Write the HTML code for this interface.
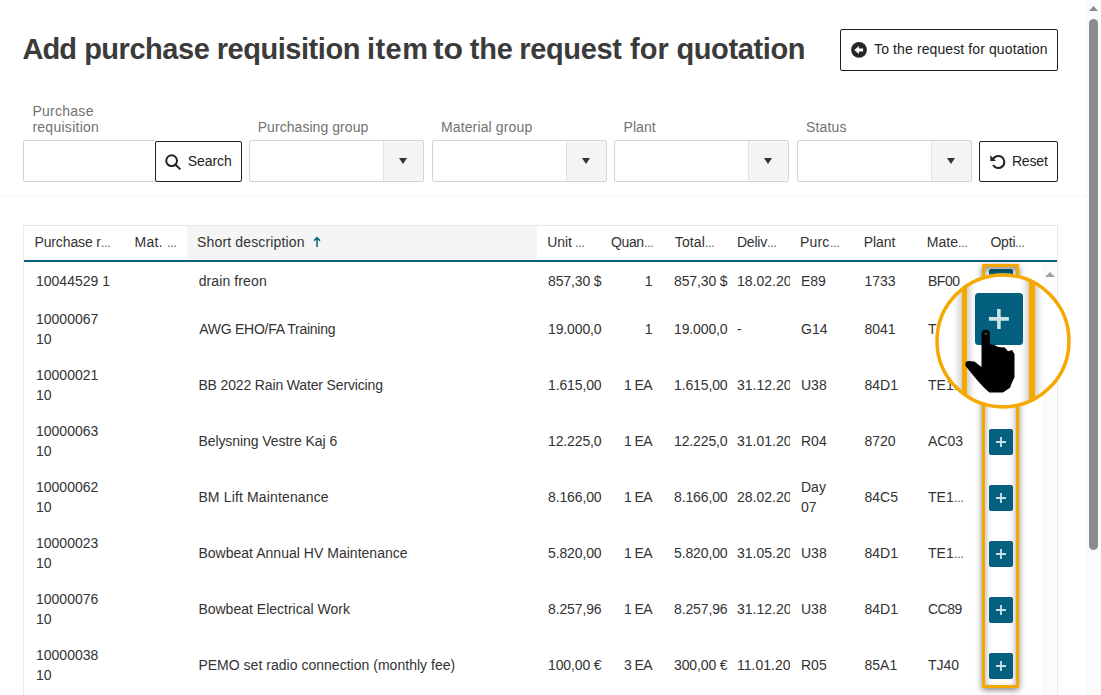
<!DOCTYPE html>
<html lang="en"><head><meta charset="utf-8"><title>Add purchase requisition item to the request for quotation</title>
<style>
*{box-sizing:border-box;margin:0;padding:0}
html,body{width:1101px;height:695px;overflow:hidden;background:#fff}
body{position:relative;font-family:"Liberation Sans",Arial,sans-serif;font-size:14px;color:#333;line-height:20px}
.abs{position:absolute}
#title{position:absolute;left:0;top:29px;height:40px;width:830px;font-size:29px;line-height:40px;font-weight:bold;color:#3b3b3b;white-space:nowrap}
.tw{position:absolute;top:0}
.btn{position:absolute;border:1px solid #1f1f1f;border-radius:2px;background:#fff;color:#222;white-space:nowrap}
.lbl{position:absolute;color:#727272;font-size:14px;line-height:16px;white-space:nowrap}
.inp{position:absolute;border:1px solid #d4d4d4;border-radius:2px;background:#fff;height:42px;top:140px}
.inp .arr{position:absolute;right:0;top:0;bottom:0;width:40px;background:#f4f4f4;border-left:1px solid #e2e2e2}
.inp .arr:after{content:"";position:absolute;left:15px;top:17px;border-left:4.5px solid transparent;border-right:4.5px solid transparent;border-top:6px solid #333}
#sep{position:absolute;left:0;top:196px;width:1086px;height:1px;background:#f6f6f6}
#table{position:absolute;left:23px;top:225px;width:1035px;height:480px;border:1px solid #e9e9e9;border-bottom:0;background:#fff}
#thead{position:absolute;left:24px;top:226px;width:1033px;height:34px}
#hline{position:absolute;left:24px;top:260px;width:1033px;height:2px;background:#0a5f7c}
#sortbg{position:absolute;left:187px;top:226px;width:350px;height:33px;background:#f5f5f5}
.h{position:absolute;top:232px;line-height:20px;color:#333;white-space:nowrap}
.row{position:absolute;left:0;width:1101px;height:0}
.c{position:absolute;white-space:nowrap;color:#333;line-height:20px}
.one{top:-10px}
.two{top:-20px}
.clip{overflow:hidden;width:53.500px;letter-spacing:-.12px}
.c1{left:36px}.c3{left:199px}.c4{left:548px}.c5{left:600px;width:52px;text-align:right;letter-spacing:-.6px}.c6{left:674px}.c7{left:737px;letter-spacing:0;width:53px}.c8{left:801px}.c9{left:864.500px}.c10{left:928px}
.plus{position:absolute;left:989px;top:-12px;width:24px;height:26px;background:#04617f;border-radius:2px}
.plus svg{position:absolute;left:6px;top:7px}
#iscroll{position:absolute;left:1042px;top:262px;width:15px;height:433px;background:#fbfbfb}
#pscroll{position:absolute;left:1086px;top:0;width:15px;height:695px;background:#fbfbfb}
#pthumb{position:absolute;left:3px;top:19px;width:9px;height:531px;background:#8b8b8b;border-radius:4.500px}
.el{display:inline-block;font-style:normal;width:10px;transform:scaleX(.7);transform-origin:0 50%}
#tw5{display:inline-block;transform:scaleX(1.1);transform-origin:0 50%}

</style></head><body>
<h1 id="title"><span class="tw" id="tw1" style="margin-left:-0.6px;letter-spacing:-0.851px;left:23px">Add</span> <span class="tw" id="tw2" style="margin-left:-1.88px;letter-spacing:-0.465px;left:86px">purchase</span> <span class="tw" id="tw3" style="margin-left:-2.27px;letter-spacing:-0.458px;left:219px">requisition</span> <span class="tw" id="tw4" style="margin-left:2.01px;letter-spacing:0.439px;left:365px">item</span> <span class="tw" id="tw5" style="margin-left:-0.7px;letter-spacing:0px;left:434px">to</span> <span class="tw" id="tw6" style="margin-left:-0.26px;letter-spacing:-0.164px;left:470px">the</span> <span class="tw" id="tw7" style="margin-left:-11.69px;letter-spacing:-0.379px;left:531px">request</span> <span class="tw" id="tw8" style="margin-left:1.1px;letter-spacing:0.057px;left:629px">for</span> <span class="tw" id="tw9" style="margin-left:-0.56px;letter-spacing:-0.38px;left:677px">quotation</span></h1>
<div class="btn" id="backbtn" style="left:840px;top:29px;width:218px;height:42px">
<svg class="abs" style="left:10px;top:12px" width="16" height="16" viewBox="0 0 16 16"><circle cx="8" cy="7.900" r="7.900" fill="#262626"/><path d="M3.300 7.900 7.900 4v2.400H12.100v3.200H7.900V12z" fill="#fff"/></svg>
<span class="abs" id="backtxt" style="margin-left:0.11px;letter-spacing:0.106px;left:33px;top:9px;line-height:20px">To the request for quotation</span>
</div>

<span class="lbl" id="l1" style="margin-left:-0.64px;letter-spacing:0.271px;left:33px;top:103px">Purchase<br>requisition</span>
<span class="lbl" id="l2" style="margin-left:0.24px;letter-spacing:0.052px;left:257.500px;top:119px">Purchasing group</span>
<span class="lbl" id="l3" style="margin-left:0.92px;letter-spacing:0.141px;left:440px;top:119px">Material group</span>
<span class="lbl" id="l4" style="margin-left:-0.55px;letter-spacing:0.092px;left:624px;top:119px">Plant</span>
<span class="lbl" id="l5" style="margin-left:-0.96px;letter-spacing:0.133px;left:807px;top:119px">Status</span>

<div class="inp" style="left:23px;width:133px"></div>
<div class="btn" id="searchbtn" style="left:155px;top:141px;width:87px;height:41px">
<svg class="abs" style="left:7px;top:10px" width="20" height="22" viewBox="0 0 20 22"><circle cx="8.600" cy="8.700" r="5.400" stroke="#222" stroke-width="2" fill="none"/><path d="M12.600 12.700 16.800 16.900" stroke="#222" stroke-width="2" stroke-linecap="round"/></svg>
<span class="abs" id="searchtxt" style="margin-left:-0.31px;letter-spacing:-0.05px;left:32px;top:9px;line-height:20px">Search</span>
</div>
<div class="inp" style="left:249px;width:175px"><span class="arr"></span></div>
<div class="inp" style="left:432px;width:175px"><span class="arr"></span></div>
<div class="inp" style="left:614px;width:175px"><span class="arr"></span></div>
<div class="inp" style="left:797px;width:175px"><span class="arr"></span></div>
<div class="btn" id="resetbtn" style="left:979px;top:141px;width:79px;height:41px">
<svg class="abs" style="left:8px;top:10px" width="20" height="20" viewBox="0 0 20 20"><path d="M4.660 7.950A6 6 0 1 1 5.100 13" stroke="#262626" stroke-width="2.100" fill="none"/><path d="M2.300 3.200V8.900H8z" fill="#262626"/></svg>
<span class="abs" id="resettxt" style="margin-left:-0.14px;letter-spacing:-0.135px;left:32px;top:9px;line-height:20px">Reset</span>
</div>

<div id="sep"></div>
<div id="table"></div>
<div id="sortbg"></div>
<span class="h" id="h1" style="margin-left:0.42px;letter-spacing:-0.119px;left:34px">Purchase r<i class="el">…</i></span>
<span class="h" id="h2" style="margin-left:0.6px;letter-spacing:0.233px;left:134px">Mat. <i class="el">…</i></span>
<span class="h" id="h3" style="margin-left:-0.9px;letter-spacing:0.143px;left:198px">Short description</span>
<svg class="abs" id="sortarrow" style="left:312px;top:236px" width="10" height="12" viewBox="0 0 10 12"><path d="M5 11V2M2 4.800 5 1.500l3 3.300" stroke="#0b5f7d" stroke-width="1.500" fill="none"/></svg>
<span class="h" id="h4" style="margin-left:-0.67px;letter-spacing:-0.147px;left:548px">Unit <i class="el">…</i></span>
<span class="h" id="h5" style="margin-left:0.04px;letter-spacing:-0.396px;left:611px">Quan<i class="el">…</i></span>
<span class="h" id="h6" style="margin-left:0.78px;letter-spacing:0.13px;left:674px">Total<i class="el">…</i></span>
<span class="h" id="h7" style="margin-left:-0.11px;letter-spacing:-0.178px;left:737px">Deliv<i class="el">…</i></span>
<span class="h" id="h8" style="margin-left:-1.1px;letter-spacing:0.225px;left:801px">Purc<i class="el">…</i></span>
<span class="h" id="h9" style="margin-left:-0.34px;letter-spacing:-0.02px;left:864px">Plant</span>
<span class="h" id="h10" style="margin-left:-0.34px;letter-spacing:0.053px;left:927px">Mate<i class="el">…</i></span>
<span class="h" id="h11" style="margin-left:-0.62px;letter-spacing:-0.157px;left:991px">Opti<i class="el">…</i></span>
<div id="hline"></div>
<div id="iscroll"><svg class="abs" style="left:2.500px;top:10.200px" width="10" height="5" viewBox="0 0 10 5"><path d="M0 5 5 0l5 5z" fill="#a0a0a0"/></svg></div>
<div id="tbody">
<div class="row" style="top:281px">
<span class="c c1 one">10044529 1</span><span class="c c3 one" id="r0c3" style="margin-left:-0.37px;letter-spacing:0.112px">drain freon</span><span class="c c4 one clip">857,30 $</span><span class="c c5 one">1</span><span class="c c6 one clip">857,30 $</span><span class="c c7 one clip">18.02.2023</span><span class="c c8 one">E89</span><span class="c c9 one">1733</span><span class="c c10 one" style="letter-spacing:-.5px">BF00</span><span class="plus"><svg width="12" height="12" viewBox="0 0 12 12"><path d="M6 1v10M1 6h10" stroke="#c9dfe5" stroke-width="1.9" fill="none"/></svg></span>
</div>
<div class="row" style="top:329px">
<span class="c c1 two">10000067<br>10</span><span class="c c3 one" id="r1c3" style="margin-left:0.34px;letter-spacing:-0.273px">AWG EHO/FA Training</span><span class="c c4 one clip">19.000,00 €</span><span class="c c5 one">1</span><span class="c c6 one clip">19.000,00 €</span><span class="c c7 one clip">-</span><span class="c c8 one">G14</span><span class="c c9 one">8041</span><span class="c c10 one">TJ40</span><span class="plus"><svg width="12" height="12" viewBox="0 0 12 12"><path d="M6 1v10M1 6h10" stroke="#c9dfe5" stroke-width="1.9" fill="none"/></svg></span>
</div>
<div class="row" style="top:385px">
<span class="c c1 two">10000021<br>10</span><span class="c c3 one" id="r2c3" style="margin-left:-0.64px;letter-spacing:-0.146px">BB 2022 Rain Water Servicing</span><span class="c c4 one clip">1.615,00 €</span><span class="c c5 one">1 EA</span><span class="c c6 one clip">1.615,00 €</span><span class="c c7 one clip">31.12.2022</span><span class="c c8 one">U38</span><span class="c c9 one">84D1</span><span class="c c10 one">TE1<i class="el">…</i></span><span class="plus"><svg width="12" height="12" viewBox="0 0 12 12"><path d="M6 1v10M1 6h10" stroke="#c9dfe5" stroke-width="1.9" fill="none"/></svg></span>
</div>
<div class="row" style="top:441px">
<span class="c c1 two">10000063<br>10</span><span class="c c3 one" id="r3c3" style="margin-left:-0.64px;letter-spacing:-0.061px">Belysning Vestre Kaj 6</span><span class="c c4 one clip">12.225,00 €</span><span class="c c5 one">1 EA</span><span class="c c6 one clip">12.225,00 €</span><span class="c c7 one clip">31.01.2023</span><span class="c c8 one">R04</span><span class="c c9 one">8720</span><span class="c c10 one">AC03</span><span class="plus"><svg width="12" height="12" viewBox="0 0 12 12"><path d="M6 1v10M1 6h10" stroke="#c9dfe5" stroke-width="1.9" fill="none"/></svg></span>
</div>
<div class="row" style="top:497px">
<span class="c c1 two">10000062<br>10</span><span class="c c3 one" id="r4c3" style="margin-left:-0.64px;letter-spacing:0.145px">BM Lift Maintenance</span><span class="c c4 one clip">8.166,00 €</span><span class="c c5 one">1 EA</span><span class="c c6 one clip">8.166,00 €</span><span class="c c7 one clip">28.02.2023</span><span class="c c8 two">Day<br>07</span><span class="c c9 one">84C5</span><span class="c c10 one">TE1<i class="el">…</i></span><span class="plus"><svg width="12" height="12" viewBox="0 0 12 12"><path d="M6 1v10M1 6h10" stroke="#c9dfe5" stroke-width="1.9" fill="none"/></svg></span>
</div>
<div class="row" style="top:553px">
<span class="c c1 two">10000023<br>10</span><span class="c c3 one" id="r5c3" style="margin-left:-0.64px;letter-spacing:0.023px">Bowbeat Annual HV Maintenance</span><span class="c c4 one clip">5.820,00 €</span><span class="c c5 one">1 EA</span><span class="c c6 one clip">5.820,00 €</span><span class="c c7 one clip">31.05.2023</span><span class="c c8 one">U38</span><span class="c c9 one">84D1</span><span class="c c10 one">TE1<i class="el">…</i></span><span class="plus"><svg width="12" height="12" viewBox="0 0 12 12"><path d="M6 1v10M1 6h10" stroke="#c9dfe5" stroke-width="1.9" fill="none"/></svg></span>
</div>
<div class="row" style="top:609px">
<span class="c c1 two">10000076<br>10</span><span class="c c3 one" id="r6c3" style="margin-left:-0.64px;letter-spacing:0.005px">Bowbeat Electrical Work</span><span class="c c4 one clip">8.257,96 €</span><span class="c c5 one">1 EA</span><span class="c c6 one clip">8.257,96 €</span><span class="c c7 one clip">31.12.2022</span><span class="c c8 one">U38</span><span class="c c9 one">84D1</span><span class="c c10 one" style="letter-spacing:-.5px">CC89</span><span class="plus"><svg width="12" height="12" viewBox="0 0 12 12"><path d="M6 1v10M1 6h10" stroke="#c9dfe5" stroke-width="1.9" fill="none"/></svg></span>
</div>
<div class="row" style="top:665px">
<span class="c c1 two">10000038<br>10</span><span class="c c3 one" id="r7c3" style="margin-left:-0.64px;letter-spacing:0.022px">PEMO set radio connection (monthly fee)</span><span class="c c4 one clip">100,00 €</span><span class="c c5 one">3 EA</span><span class="c c6 one clip">300,00 €</span><span class="c c7 one clip">11.01.2023</span><span class="c c8 one">R05</span><span class="c c9 one">85A1</span><span class="c c10 one">TJ40</span><span class="plus"><svg width="12" height="12" viewBox="0 0 12 12"><path d="M6 1v10M1 6h10" stroke="#c9dfe5" stroke-width="1.9" fill="none"/></svg></span>
</div>
</div>
<div id="outline" class="abs" style="left:982px;top:264px;width:37px;height:424px;border:3px solid #f5a800;border-radius:1px;box-shadow:0 2px 6px rgba(0,0,0,.5), inset 0 3px 6px rgba(0,0,0,.42)"></div>
<div id="mag" class="abs" style="left:935px;top:273px;width:136px;height:136px;background:#fff;overflow:hidden;clip-path:circle(67.500px at 68px 67.900px)">
 <div class="abs" style="left:26.500px;top:-20px;width:5.400px;height:180px;background:#f5a800;box-shadow:0 0 8px 1px rgba(0,0,0,.33)"></div>
 <div class="abs" style="left:94px;top:-20px;width:5.600px;height:180px;background:#f5a800;box-shadow:0 0 8px 1px rgba(0,0,0,.33)"></div>
 <div class="abs" style="left:40px;top:19.800px;width:47.800px;height:52px;border-radius:3.500px;background:#03617f"></div>
 <svg class="abs" style="left:52px;top:34px" width="24" height="24" viewBox="0 0 24 24"><path d="M11.900 1.900v20M1.900 11.900h20" stroke="#cfe2e8" stroke-width="3.600" fill="none"/></svg>
 <svg class="abs" id="hand" style="left:28px;top:54px" width="56" height="70" viewBox="0 0 56 70"><path d="M18.500 6.400c0-2.300 1.500-3.700 4.200-3.700s4.200 1.400 4.200 3.700L27 17.300l3.800.4 4.600 2.200 6.400.6 3.300 3.700 3.900-1.100 2.500 3.900v23.300l-2.500 5.200-2 5.200-7.100 4.900H26.300l-5.200-4.900L14 52.900 2.400 38.700v-3.300l2.500-1.300 6.500.4 7.100 5.500z" fill="#000"/><rect x="21.400" y="6" width="3.200" height="1.500" rx=".7" fill="#5a5a5a"/></svg>
</div>
<svg class="abs" style="left:930px;top:268px" width="146" height="146" viewBox="0 0 146 146"><circle cx="73" cy="72.900" r="66" stroke="#f5a800" stroke-width="3.500" fill="none"/></svg>
<div id="pscroll"><svg class="abs" style="left:3px;top:5.800px" width="9" height="5" viewBox="0 0 9 5"><path d="M0 5 4.500 0 9 5z" fill="#8a8a8a"/></svg><div id="pthumb"></div></div>
</body></html>
